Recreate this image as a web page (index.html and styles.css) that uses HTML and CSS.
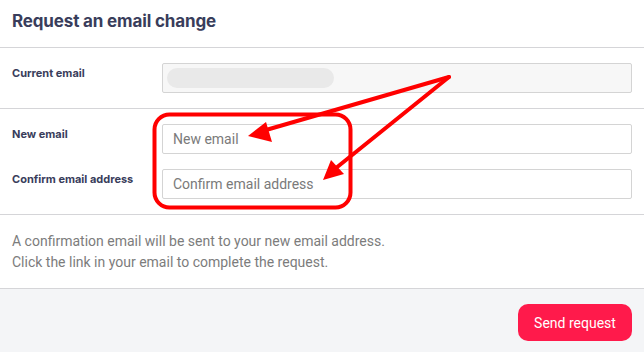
FILE: index.html
```html
<!DOCTYPE html>
<html>
<head>
<meta charset="utf-8">
<link rel="stylesheet" href="styles.css">
</head>
<body>
<div class="panel">
  <header class="head"><h1>Request an email change</h1></header>
  <section class="rows">
    <div class="row">
      <label class="lbl">Current email</label>
      <div class="field readonly"><span class="pill"></span></div>
    </div>
  </section>
  <section class="rows">
    <div class="row">
      <label class="lbl">New email</label>
      <div class="field"><span class="ph">New email</span></div>
    </div>
    <div class="row">
      <label class="lbl">Confirm email address</label>
      <div class="field"><span class="ph">Confirm email address</span></div>
    </div>
  </section>
  <section class="note">
    <p>A confirmation email will be sent to your new email address.</p>
    <p>Click the link in your email to complete the request.</p>
  </section>
  <footer class="foot"><button class="btn">Send request</button></footer>
  <svg class="annot" width="644" height="352" viewBox="0 0 644 352">
    <rect x="154.5" y="114.5" width="196" height="93" rx="15" ry="15" fill="none" stroke="#ff0000" stroke-width="4"/>
    <line x1="449" y1="77" x2="266" y2="130" stroke="#ff0000" stroke-width="4" stroke-linecap="round"/>
    <line x1="449" y1="77" x2="336" y2="168" stroke="#ff0000" stroke-width="4" stroke-linecap="round"/>
    <polygon points="248,136 266,122 272,142" fill="#ff0000"/>
    <polygon points="323,180 331,160 344,174" fill="#ff0000"/>
  </svg>
</div>
</body>
</html>
```

FILE: styles.css
```css
* { box-sizing: border-box; }
html, body { margin: 0; padding: 0; background: #fff; }
body { width: 644px; height: 352px; overflow: hidden; font-family: Roboto, "Liberation Sans", sans-serif; }
.panel { position: relative; width: 644px; height: 352px; display: flex; flex-direction: column; }
.panel > * { flex-shrink: 0; }
.head { height: 48px; border-bottom: 1px solid #d5d5d8; padding: 0 12px; display: flex; align-items: center; }
.head h1 { margin: 0; font-family: Inter, "Noto Sans", sans-serif; font-weight: 700; font-size: 17px; color: #393d5b; letter-spacing: -0.15px; position: relative; top: -3px; }
.rows { border-bottom: 1px solid #d5d5d8; padding: 15px 12px 15px 12px; display: flex; flex-direction: column; gap: 15px; }
.row { display: grid; grid-template-columns: 150px 1fr; align-items: start; }
.lbl { font-family: Inter, "Noto Sans", sans-serif; font-weight: 700; font-size: 11px; color: #393d5b; padding-top: 3px; line-height: 14px; }
.field { height: 30px; border: 1px solid #d4d4d4; border-radius: 2px; background: #fff; display: flex; align-items: center; padding: 0 10px; }
.field.readonly { background: #f7f7f7; padding: 0 4px; }
.pill { display: block; width: 167px; height: 20px; border-radius: 10px; background: #e9e9e9; }
.ph { font-size: 14px; color: #7a7a7a; }
.note { border-bottom: 1px solid #d5d5d8; padding: 16px 12px 14px; height: 74px; }
.note p { margin: 0; font-size: 14px; line-height: 21px; color: #7c7c7c; }
.foot { flex: 1 0 auto; background: #f4f5f7; display: flex; justify-content: flex-end; align-items: flex-start; padding: 15px 12px; }
.btn { width: 114px; height: 37px; border: none; border-radius: 10px; background: #ff1a4b; color: #fff; font-family: Roboto, "Liberation Sans", sans-serif; font-size: 14px; padding: 0; }
.annot { position: absolute; left: 0; top: 0; pointer-events: none; }
```
